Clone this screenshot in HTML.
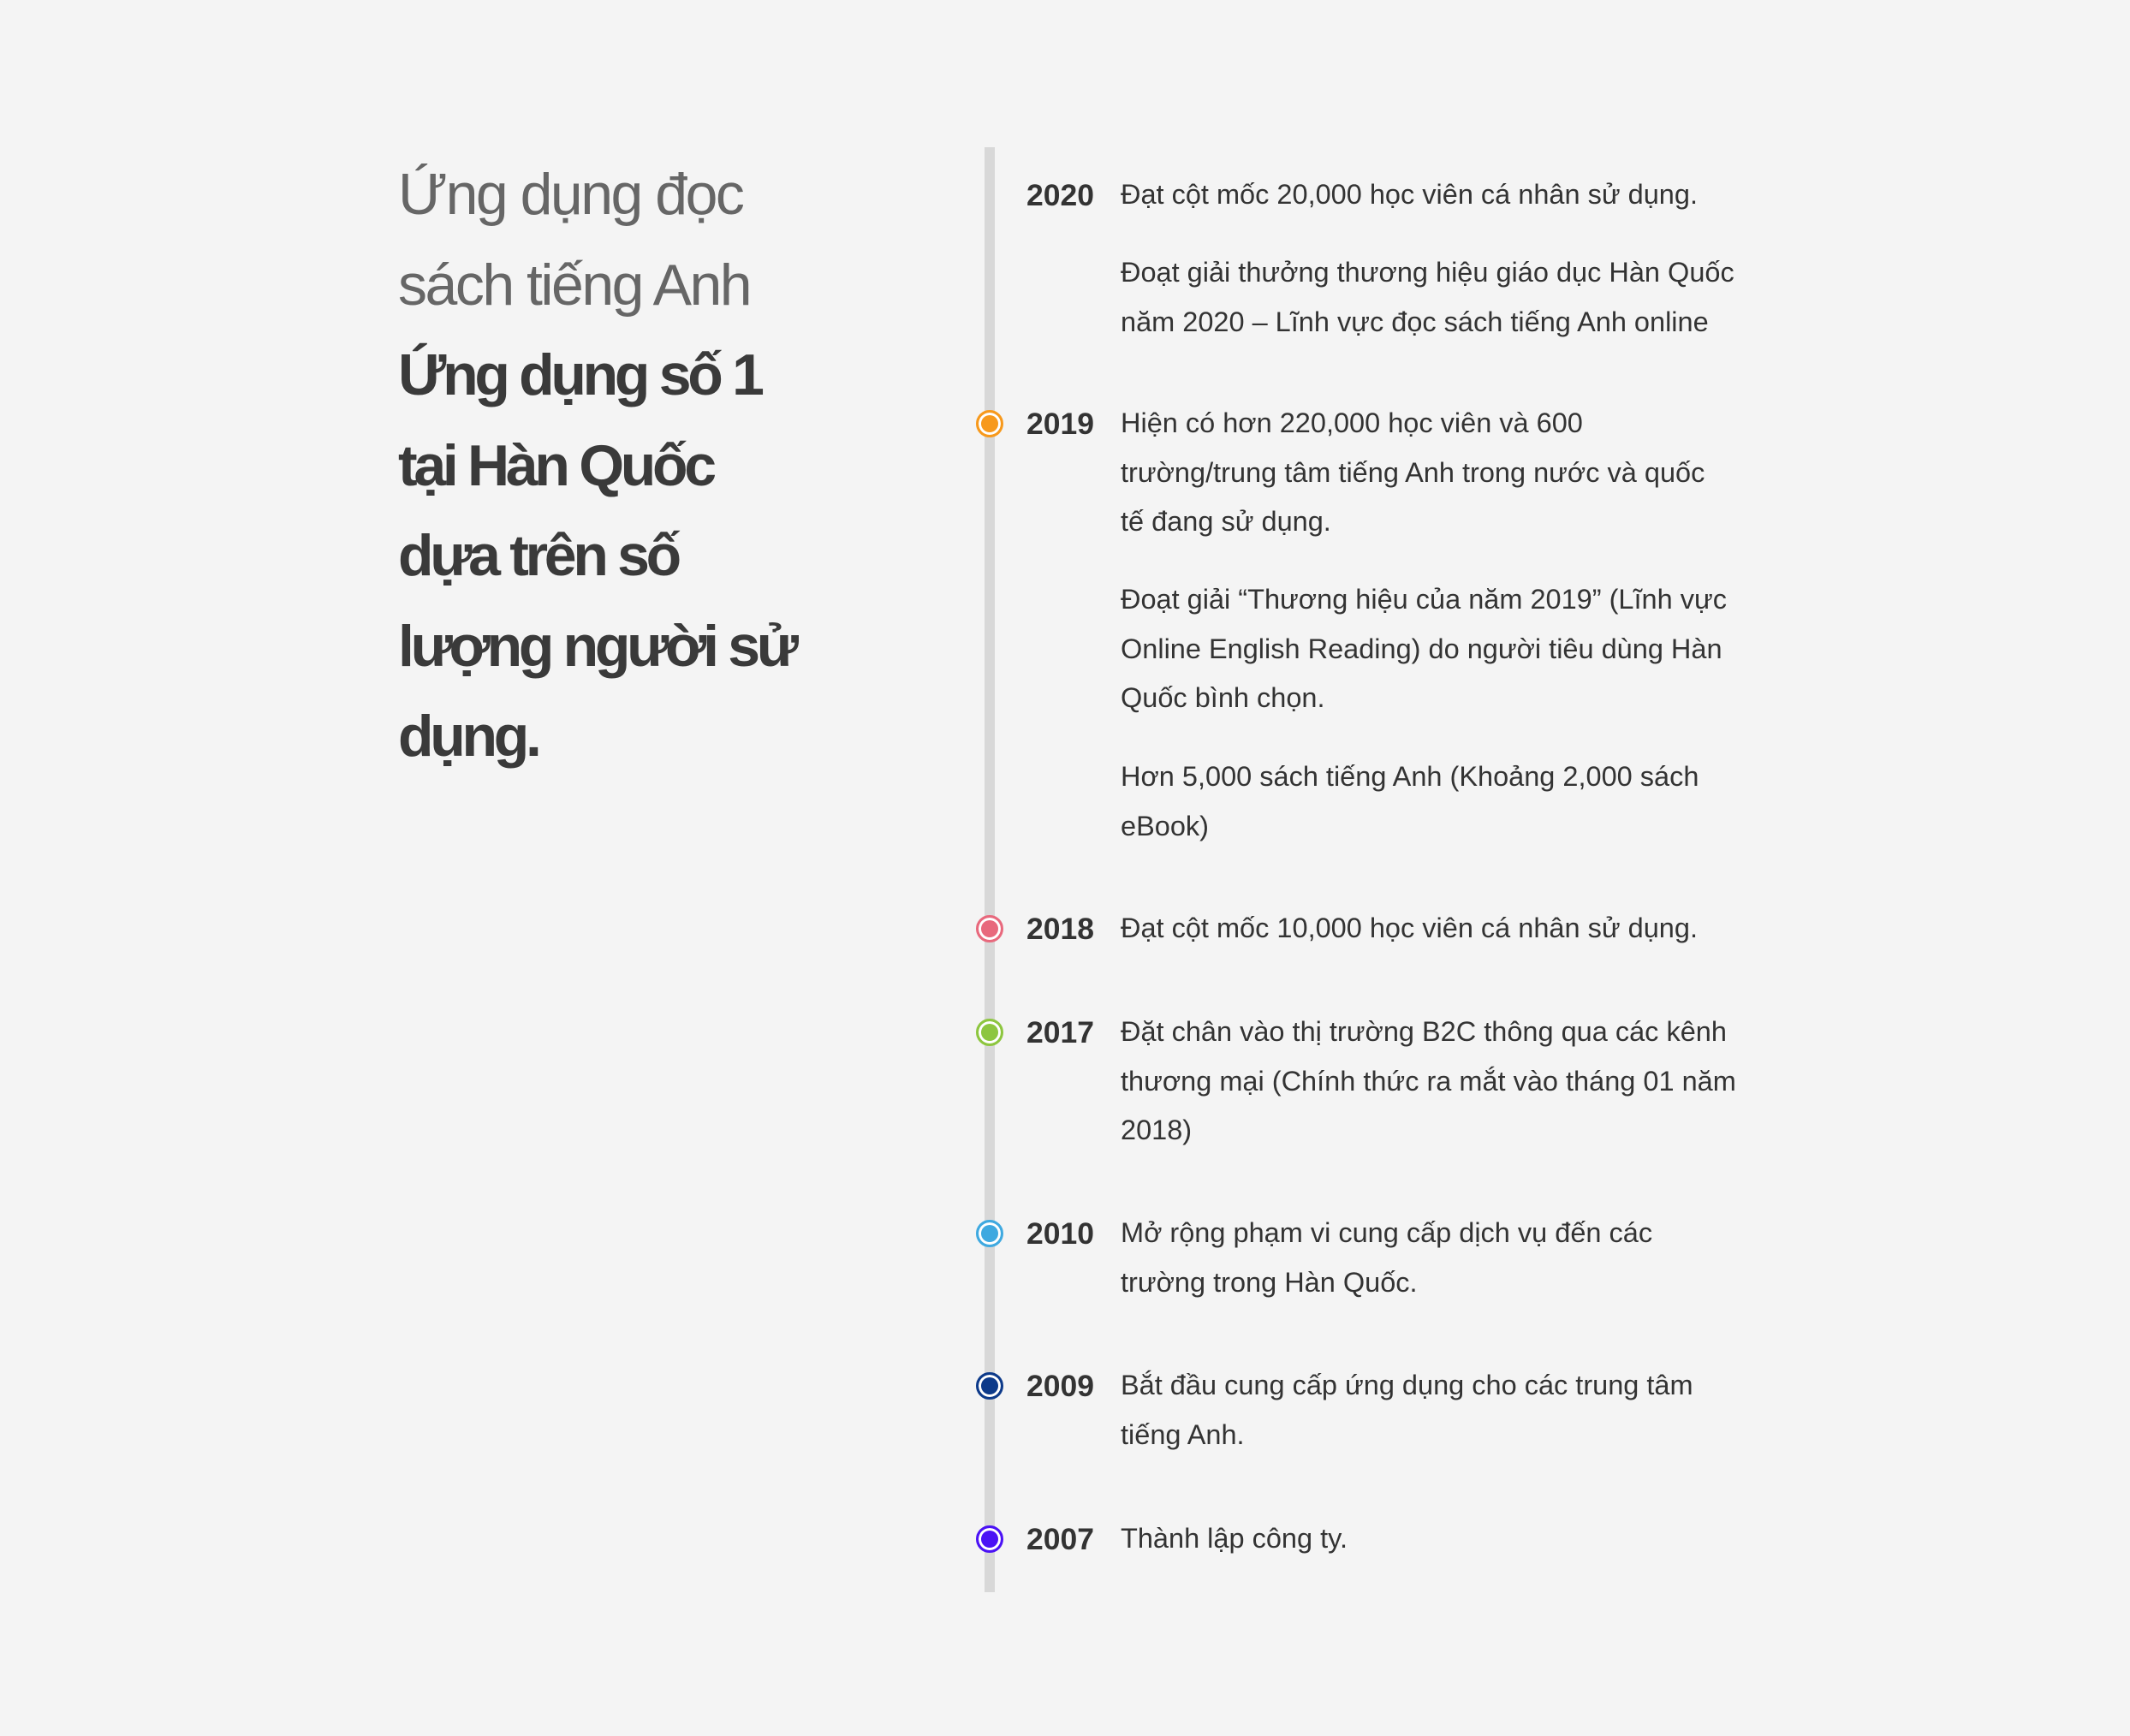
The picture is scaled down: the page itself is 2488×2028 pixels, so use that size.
<!DOCTYPE html>
<html><head><meta charset="utf-8"><style>
html,body{margin:0;padding:0}
body{width:2488px;height:2028px;background:#f4f4f4;position:relative;overflow:hidden;font-family:"Liberation Sans",sans-serif;color:#333}
.t{position:absolute;left:465px;font-size:68px;line-height:105.5px;letter-spacing:-2.5px;white-space:nowrap}
.l{color:#666;font-weight:normal}
.b{color:#3a3a3a;font-weight:bold;letter-spacing:-4.3px}
.line{position:absolute;left:1150px;top:172px;width:12px;height:1688px;background:#d8d8d8}
.y{position:absolute;left:1199px;font-size:35.5px;font-weight:bold;line-height:58px;color:#333;white-space:nowrap}
.p{position:absolute;left:1309px;font-size:32.5px;line-height:57.5px;color:#333;white-space:nowrap}
.d{position:absolute;left:1140px;width:26px;height:26px;border-radius:50%;border:3px solid;box-shadow:inset 0 0 0 3px #fff}
</style></head><body>
<div class="t l" style="top:175px">Ứng dụng đọc<br>sách tiếng Anh</div>
<div class="t b" style="top:386px">Ứng dụng số 1<br>tại Hàn Quốc<br>dựa trên số<br>lượng người sử<br>dụng.</div>
<div class="line"></div>

<div class="y" style="top:199px">2020</div>
<div class="p" style="top:199px">Đạt cột mốc 20,000 học viên cá nhân sử dụng.</div>
<div class="p" style="top:290px">Đoạt giải thưởng thương hiệu giáo dục Hàn Quốc<br>năm 2020 – Lĩnh vực đọc sách tiếng Anh online</div>

<div class="d" style="top:479px;border-color:#f7991c;background:#f7991c"></div>
<div class="y" style="top:466px">2019</div>
<div class="p" style="top:466px">Hiện có hơn 220,000 học viên và 600<br>trường/trung tâm tiếng Anh trong nước và quốc<br>tế đang sử dụng.</div>
<div class="p" style="top:672px">Đoạt giải “Thương hiệu của năm 2019” (Lĩnh vực<br>Online English Reading) do người tiêu dùng Hàn<br>Quốc bình chọn.</div>
<div class="p" style="top:879px">Hơn 5,000 sách tiếng Anh (Khoảng 2,000 sách<br>eBook)</div>

<div class="d" style="top:1069px;border-color:#e8697d;background:#e8697d"></div>
<div class="y" style="top:1056px">2018</div>
<div class="p" style="top:1056px">Đạt cột mốc 10,000 học viên cá nhân sử dụng.</div>

<div class="d" style="top:1190px;border-color:#8dc63f;background:#8dc63f"></div>
<div class="y" style="top:1177px">2017</div>
<div class="p" style="top:1177px">Đặt chân vào thị trường B2C thông qua các kênh<br>thương mại (Chính thức ra mắt vào tháng 01 năm<br>2018)</div>

<div class="d" style="top:1425px;border-color:#3fa9e0;background:#3fa9e0"></div>
<div class="y" style="top:1412px">2010</div>
<div class="p" style="top:1412px">Mở rộng phạm vi cung cấp dịch vụ đến các<br>trường trong Hàn Quốc.</div>

<div class="d" style="top:1603px;border-color:#0d3a8a;background:#0d3a8a"></div>
<div class="y" style="top:1590px">2009</div>
<div class="p" style="top:1590px">Bắt đầu cung cấp ứng dụng cho các trung tâm<br>tiếng Anh.</div>

<div class="d" style="top:1782px;border-color:#4b12f5;background:#4b12f5"></div>
<div class="y" style="top:1769px">2007</div>
<div class="p" style="top:1769px">Thành lập công ty.</div>
</body></html>
